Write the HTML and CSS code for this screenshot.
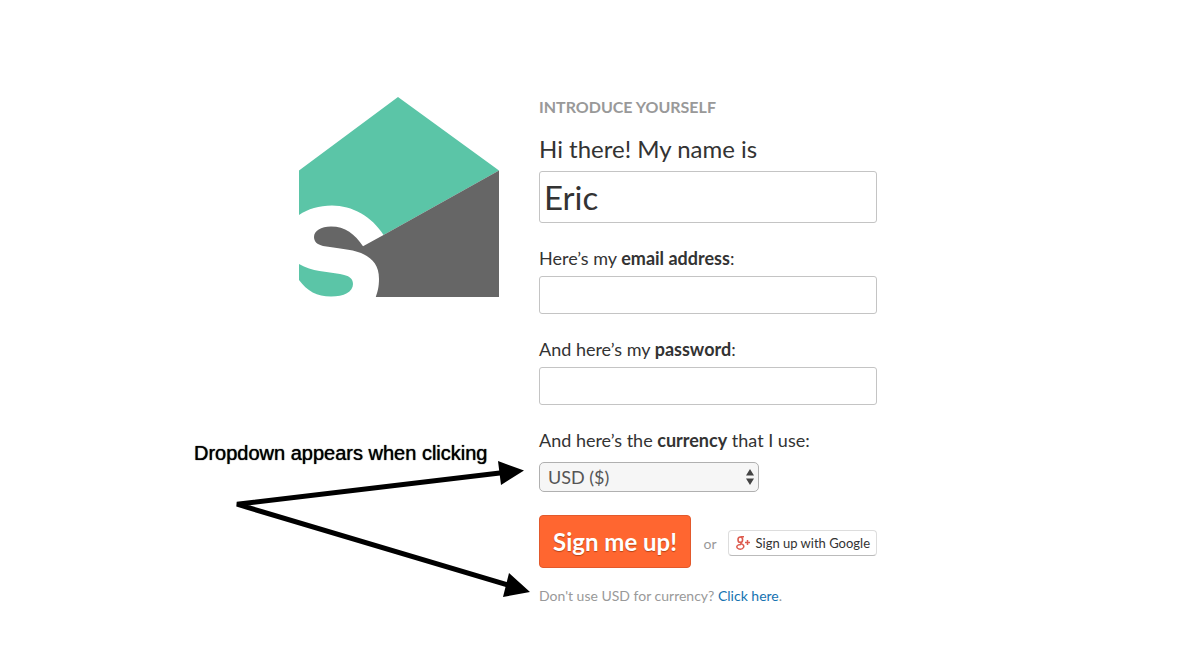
FILE: index.html
```html
<!DOCTYPE html>
<html lang="en">
<head>
<meta charset="utf-8">
<meta name="viewport" content="width=device-width, initial-scale=1">
<title>Sign up</title>
<link rel="stylesheet" href="styles.css">
</head>
<body>
<main class="signup">
  <svg class="logo" viewBox="0 0 200 200" role="img" aria-label="Logo">
    <path fill="#5bc5a7" d="M0 73.500L99 0L200 73.500L84.500 138C73 119.500 53 108.500 33 108.500C20 108.500 9 112 0 118Z"/>
    <path fill="#666" d="M200 73.500V200H76.800C78.500 195 80 190 80 182C80 168 73.500 161 62 156C52 152 38 151.500 24 149C18 147.500 15 144.500 15 140C15 134 22 129.500 32 129.500C46 129.500 56 137 64 149.300L84.500 138Z"/>
    <path fill="#5bc5a7" d="M0 167C13 175 28 174.500 41 177C50 178.500 54 181.500 54 187C54 195 45 199.500 32 199.500C18 199.500 8 194 0 183Z"/>
  </svg>
  <form class="form">
    <h1 class="title">INTRODUCE YOURSELF</h1>
    <label class="label label-lg" for="name">Hi there! My name is</label>
    <input class="field field-lg" id="name" type="text" value="Eric">
    <label class="label" for="email">Here’s my <strong>email address</strong>:</label>
    <input class="field" id="email" type="email">
    <label class="label" for="password">And here’s my <strong>password</strong>:</label>
    <input class="field" id="password" type="password">
    <label class="label" for="currency">And here’s the <strong>currency</strong> that I use:</label>
    <div class="select-wrap">
      <select class="select" id="currency"><option>USD ($)</option></select>
      <svg class="select-arrows" viewBox="0 0 8 16" aria-hidden="true"><path fill="#444" d="M4 0L8 6.500H0ZM0 9.500H8L4 16Z"/></svg>
    </div>
    <div class="actions">
      <button class="submit" type="submit">Sign me up!</button>
      <div class="alternative">
        <span class="or">or</span>
        <button class="google" type="button">
          <svg class="google-icon" viewBox="0 0 14 14" fill="none" stroke="#dd5b4e" aria-hidden="true">
            <ellipse cx="4.300" cy="3.700" rx="2.300" ry="2.700" stroke-width="1.600"/>
            <path stroke-width="1.500" d="M4.500 .8H8M5.500 6.200C3.800 7.300 5.500 7.800 6.800 8.700C8.800 10.200 7.500 13.200 4.300 13.200C1.500 13.200 .5 11.400 1 10C1.600 8.900 3.200 8.400 5 8.400"/>
            <path stroke-width="1.500" d="M9 6.500H14M11.500 4V9"/>
          </svg>
          Sign up with Google
        </button>
      </div>
    </div>
    <p class="hint">Don't use USD for currency? <a class="link" href="#currency">Click here</a>.</p>
  </form>
  <div class="note">
    <p class="note-text">Dropdown appears when clicking</p>
    <svg class="note-arrows" viewBox="0 0 340 150" aria-hidden="true">
      <path fill="none" stroke="#000" stroke-width="5" d="M310 22.500L43 54.200L317 136"/>
      <path d="M304 11L330 20.500L307 35ZM315 123L336 142L309 147Z"/>
    </svg>
  </div>
</main>
</body>
</html>
```
FILE: styles.css
```css
* {
  box-sizing: border-box;
}

body {
  margin: 0;
  padding-right: 9px;
  background: #fff;
  color: #333;
  font-family: Lato, "Liberation Sans", sans-serif;
  font-size: 18px;
}

button,
input,
select {
  font: inherit;
  color: inherit;
}

.signup {
  position: relative;
  display: flex;
  align-items: flex-start;
  gap: 40px;
  max-width: 578px;
  margin: 96px auto 0;
}

.logo {
  flex: none;
  width: 200px;
  margin-top: 1px;
}

.form {
  display: flex;
  flex: 1;
  flex-direction: column;
}

.title {
  margin: 0 0 15px;
  color: #999;
  font-size: 16px;
  line-height: 22px;
}

.label {
  margin-bottom: 6px;
  line-height: 24px;
}

.label-lg {
  font-size: 24px;
  line-height: 32px;
}

.field {
  width: 100%;
  height: 38px;
  margin-bottom: 23px;
  padding: 0 4px;
  border: 1px solid #c4c4c4;
  border-radius: 3px;
  background: #fff;
}

.field-lg {
  height: 52px;
  font-size: 33px;
}

.select-wrap {
  position: relative;
  width: 220px;
  margin-top: 4px;
}

.select {
  display: block;
  width: 100%;
  height: 30px;
  padding: 0 8px;
  border: 1px solid #b0b0b0;
  border-radius: 5px;
  background: #f6f6f6;
  color: #555;
  appearance: none;
}

.select-arrows {
  position: absolute;
  top: 7px;
  right: 5px;
  width: 8px;
  height: 16px;
  pointer-events: none;
}

.actions {
  display: flex;
  align-items: center;
  justify-content: space-between;
  margin: 23px 0 18px;
}

.submit {
  width: 152px;
  height: 53px;
  padding: 0;
  border: 1px solid #e2592c;
  border-radius: 4px;
  background: #ff6630;
  color: #fff;
  font-size: 24px;
  font-weight: bold;
  text-shadow: 0 1px 1px #b84315;
}

.alternative {
  display: flex;
  align-items: center;
  gap: 11px;
  padding-top: 3px;
}

.or {
  color: #999;
  font-size: 14px;
}

.google {
  display: flex;
  align-items: center;
  gap: 6px;
  height: 26px;
  padding: 0 6px 0 7px;
  border: 1px solid #ddd;
  border-bottom-color: #bbb;
  border-radius: 4px;
  background: #fff;
  font-size: 13px;
  white-space: nowrap;
}

.google-icon {
  width: 14px;
  height: 14px;
}

.hint {
  margin: 0;
  color: #999;
  font-size: 14px;
  line-height: 20px;
}

.link {
  color: #1673b1;
  text-decoration: none;
}

/* Annotation laid over the page */
.note {
  position: absolute;
  top: 345px;
  left: -105px;
  width: 340px;
  color: #000;
  pointer-events: none;
}

.note-text {
  margin: 0;
  font-family: "Liberation Sans", sans-serif;
  font-size: 20px;
  line-height: 24px;
  text-shadow: 0 0 1px #000;
}

.note-arrows {
  display: block;
  width: 100%;
  margin-top: -15px;
}
```
